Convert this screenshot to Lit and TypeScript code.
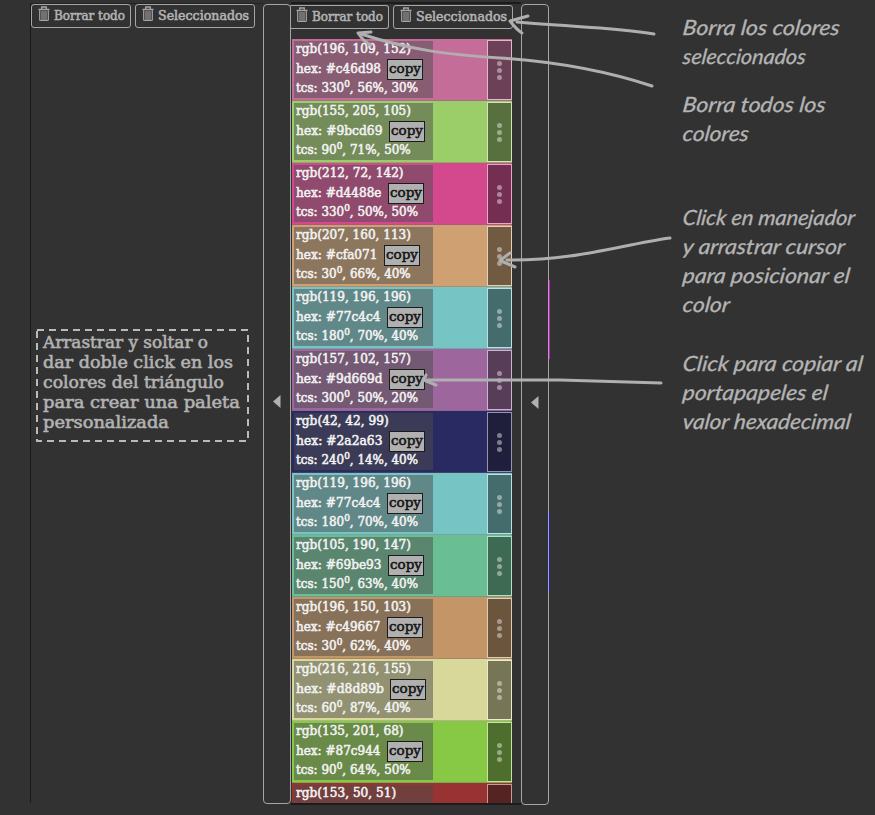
import { LitElement, html, css, svg, nothing } from "lit";
import { customElement, property } from "lit/decorators.js";
import { styleMap } from "lit/directives/style-map.js";

interface Swatch {
  rgb: number[];
  hex: string;
  hexWidth?: number;
  tcs?: [number, number, number];
}

const SWATCHES: Swatch[] = [
  { rgb: [196, 109, 152], hex: "#c46d98", hexWidth: 85, tcs: [330, 56, 30] },
  { rgb: [155, 205, 105], hex: "#9bcd69", hexWidth: 86.5, tcs: [90, 71, 50] },
  { rgb: [212, 72, 142], hex: "#d4488e", hexWidth: 85.5, tcs: [330, 50, 50] },
  { rgb: [207, 160, 113], hex: "#cfa071", hexWidth: 81.5, tcs: [30, 66, 40] },
  { rgb: [119, 196, 196], hex: "#77c4c4", hexWidth: 84.5, tcs: [180, 70, 40] },
  { rgb: [157, 102, 157], hex: "#9d669d", hexWidth: 86.5, tcs: [300, 50, 20] },
  { rgb: [42, 42, 99], hex: "#2a2a63", hexWidth: 86.5, tcs: [240, 14, 40] },
  { rgb: [119, 196, 196], hex: "#77c4c4", hexWidth: 84.5, tcs: [180, 70, 40] },
  { rgb: [105, 190, 147], hex: "#69be93", hexWidth: 85.5, tcs: [150, 63, 40] },
  { rgb: [196, 150, 103], hex: "#c49667", hexWidth: 84.5, tcs: [30, 62, 40] },
  { rgb: [216, 216, 155], hex: "#d8d89b", hexWidth: 88, tcs: [60, 87, 40] },
  { rgb: [135, 201, 68], hex: "#87c944", hexWidth: 84.5, tcs: [90, 64, 50] },
  { rgb: [153, 50, 51], hex: "#993233" },
];

const NOTES: [string, number][][] = [
  [["Borra los colores", 157], ["seleccionados", 123]],
  [["Borra todos los", 143], ["colores", 66]],
  [["Click en manejador", 172], ["y arrastrar cursor", 162], ["para posicionar el", 167], ["color", 47]],
  [["Click para copiar al", 180], ["portapapeles el", 145], ["valor hexadecimal", 168]],
];

// One line of text set to a fixed measure.
const line = (content: unknown, width: number, height: number, base: number) => html`
  <svg class="line" width=${width} height=${height}>
    <text x="0" y=${base} textLength=${width} lengthAdjust="spacingAndGlyphs">${content}</text>
  </svg>`;

const lineStyles = css`
  .line {
    display: block; overflow: visible; fill: currentColor; flex: none;
    stroke: currentColor; stroke-width: .55px;
  }
  :host { font-family: "DejaVu Serif", serif; }
`;

@customElement("tool-button")
class ToolButton extends LitElement {
  @property() label = "";
  @property({ type: Number }) measure = 80;
  static styles = [lineStyles, css`
    :host {
      display: flex; box-sizing: border-box; height: 24px; padding: 1px 5px 0 6px;
      border: 1px solid #a6a6a6; border-radius: 3px; color: #b2b2b2;
      font-size: 12px; gap: 4px;
    }
    .bin { flex: none; fill: none; stroke: #a6a6a6; }
  `];
  render() {
    return html`
      <svg class="bin" width="12" height="16" viewBox="0 0 12 16">
        <path d="M.5 3.5h11M3.7 3V1h4.6v2" stroke-width="1.3" />
        <path d="M1.7 4.2v9.6q0 .7.7.7h7.2q.7 0 .7-.7V4.2" stroke-width="1.2" />
        <path d="M4 5v9M6 5v9M8 5v9" stroke-width="1.1" />
      </svg>
      ${line(this.label, this.measure, 18, 13.5)}`;
  }
}

@customElement("color-row")
class ColorRow extends LitElement {
  @property({ attribute: false }) swatch!: Swatch;
  static styles = [lineStyles, css`
    :host { display: block; flex: none; height: 62px; }
    .row {
      box-sizing: border-box; height: 62px; display: flex; justify-content: space-between;
      padding: 2px 0 0 2px; border-bottom: 1px solid rgba(110, 110, 110, .35);
    }
    .info {
      box-sizing: border-box; width: 139px; height: 57px; padding-left: 2px;
      background: rgba(75, 75, 75, .5); color: #f2f2f2; font-size: 12px;
    }
    .mid { display: flex; gap: 6px; height: 20px; margin-top: 2px; }
    .copy {
      box-sizing: border-box; width: 36px; height: 21px; margin-top: -1px; padding: 0 1px;
      background: #b0b0b0; border: 1px solid #1b1b1b; color: #151515; font-size: 13.5px;
    }
    .sup { font-size: 9px; }
    .handle {
      box-sizing: border-box; width: 25px; height: 60px; margin-top: -1px; display: flex;
      flex-direction: column; align-items: center; justify-content: center; gap: 2px;
      border: 1px solid rgba(255, 255, 255, .5); background: rgba(20, 20, 20, .5);
      background-clip: padding-box;
    }
    .dot { width: 5px; height: 5px; border-radius: 50%; background: rgba(255, 255, 255, .42); }
  `];

  private details(hex: string, hexWidth: number, tcs: [number, number, number]) {
    const tcsWidth = 122 - 7.3 * (3 - String(tcs[0]).length);
    return html`
      <div class="mid">
        ${line(`hex: ${hex}`, hexWidth, 19, 13)}
        <div class="copy">${line("copy", 32, 19, 13)}</div>
      </div>
      ${line(svg`tcs: ${tcs[0]}<tspan class="sup" dy="-5">0</tspan><tspan dy="5">, ${tcs[1]}%, ${tcs[2]}%</tspan>`, tcsWidth, 17, 12)}`;
  }

  render() {
    const { rgb, hex, hexWidth, tcs } = this.swatch;
    const rgbText = `rgb(${rgb.join(", ")})`;
    return html`
      <div class="row" style=${styleMap({ backgroundColor: hex })}>
        <div class="info">
          ${line(rgbText, 115 - 7.4 * (18 - rgbText.length), 17, 12)}
          ${tcs && hexWidth ? this.details(hex, hexWidth, tcs) : nothing}
        </div>
        <div class="handle">
          ${tcs ? html`<i class="dot"></i><i class="dot"></i><i class="dot"></i>` : nothing}
        </div>
      </div>`;
  }
}

@customElement("app-root")
class AppRoot extends LitElement {
  static styles = [lineStyles, css`
    :host {
      display: block; position: relative; width: 875px; height: 815px; overflow: hidden;
      background: #323232; color: #b2b2b2;
    }
    .page { display: flex; height: 815px; box-sizing: border-box; padding: 3px 0 0 30px; }
    .empty {
      box-sizing: border-box; width: 233px; height: 800px; flex: none;
      border-left: 1px solid #1a1a1a; border-top: 1px solid #222;
    }
    .tools { display: flex; gap: 4px; }
    .hint {
      display: flex; box-sizing: border-box; width: 213px; height: 113px;
      margin: 301px 0 0 5px; font-size: 17px;
    }
    .hint .line { stroke-width: .6px; }
    .dash { display: block; }
    .dash rect { fill: none; stroke: #bababa; stroke-width: 2; stroke-dasharray: 7 5; }
    .lines { margin: 3px 0 0 -206px; }
    .bar {
      box-sizing: border-box; width: 28px; height: 800px; margin-top: 1px;
      border: 1px solid #a6a6a6; border-radius: 4px; display: flex; align-items: center;
      justify-content: center; flex: none;
    }
    .bar.last { height: 801px; }
    .bar svg { fill: #b2b2b2; margin-top: -5px; }
    .palette {
      width: 230px; height: 799px; border-top: 2px solid #1c1c1c;
      border-bottom: 2px solid #1c1c1c; flex: none; margin-top: -1px;
    }
    .tools.second { margin: 1px 0 0 -2px; }
    .second tool-button:first-child { border-left-color: transparent; }
    .rows {
      display: flex; flex-direction: column; width: 220px; height: 764px;
      margin: 10px 0 0 1px; overflow: hidden;
    }
    .edge { width: 2px; flex: none; display: flex; flex-direction: column; margin-left: -.5px; }
    .pink { height: 79px; margin-top: 277px; background: #d416d4; width: 1.5px; }
    .blue { height: 79px; margin-top: 154px; background: #1a1ad8; width: 1.5px; }
    .notes {
      margin: 10px 0 0 132.5px; font-family: "Lato", sans-serif; font-style: italic;
      font-size: 21px; color: #b4b4b4;
    }
    .notes .line { transform: skewX(-7deg); stroke-width: .3px; }
    .note { margin-bottom: 19px; }
    .note:nth-child(2) { margin-bottom: 55px; }
    .note:nth-child(3) { margin-bottom: 30px; }
    .arrows {
      position: absolute; left: 0; top: 0; fill: none; stroke: #afafaf;
      stroke-width: 3; stroke-linecap: round; stroke-linejoin: round; pointer-events: none;
    }
  `];

  private bar(last: boolean) {
    return html`<div class="bar ${last ? "last" : ""}">
      <svg width="8" height="13" viewBox="0 0 8 13"><path d="M7.5 0v13L0 6.5z" /></svg>
    </div>`;
  }

  render() {
    const hint: [string, number][] = [
      ["Arrastrar y soltar o", 165], ["dar doble click en los", 190],
      ["colores del triángulo", 181], ["para crear una paleta", 197], ["personalizada", 126],
    ];
    return html`
      <div class="page">
        <div class="empty">
          <div class="tools">
            <tool-button label="Borrar todo" measure="71"></tool-button>
            <tool-button label="Seleccionados" measure="91"></tool-button>
          </div>
          <div class="hint">
            <svg class="dash" width="213" height="113"><rect x="1" y="1" width="211" height="111" /></svg>
            <div class="lines">${hint.map(([t, w]) => line(t, w, 20, 16))}</div>
          </div>
        </div>
        ${this.bar(false)}
        <div class="palette">
          <div class="tools second">
            <tool-button label="Borrar todo" measure="71"></tool-button>
            <tool-button label="Seleccionados" measure="91"></tool-button>
          </div>
          <div class="rows">${SWATCHES.map((s) => html`<color-row .swatch=${s}></color-row>`)}</div>
        </div>
        ${this.bar(true)}
        <div class="edge"><i class="pink"></i><i class="blue"></i></div>
        <div class="notes">
          ${NOTES.map((n) => html`<div class="note">${n.map(([t, w]) => line(t, w, 29, 22))}</div>`)}
        </div>
      </div>
      <svg class="arrows" width="875" height="815">
        <path d="M654 34C615 27 570 27 517 22" />
        <path d="M528 16L510 21Q517 30 522 33" />
        <path d="M652 86C600 69 545 61 500 58C450 55 410 50 361 34" />
        <path d="M371 32L358 33Q364 42 371 45" />
        <path d="M670 238C620 245 575 261 507 260" />
        <path d="M510 253L500 260.500L515 267" />
        <path d="M661 383L560 380H427" />
        <path d="M426 375L424 380L436 385" />
      </svg>`;
  }
}
